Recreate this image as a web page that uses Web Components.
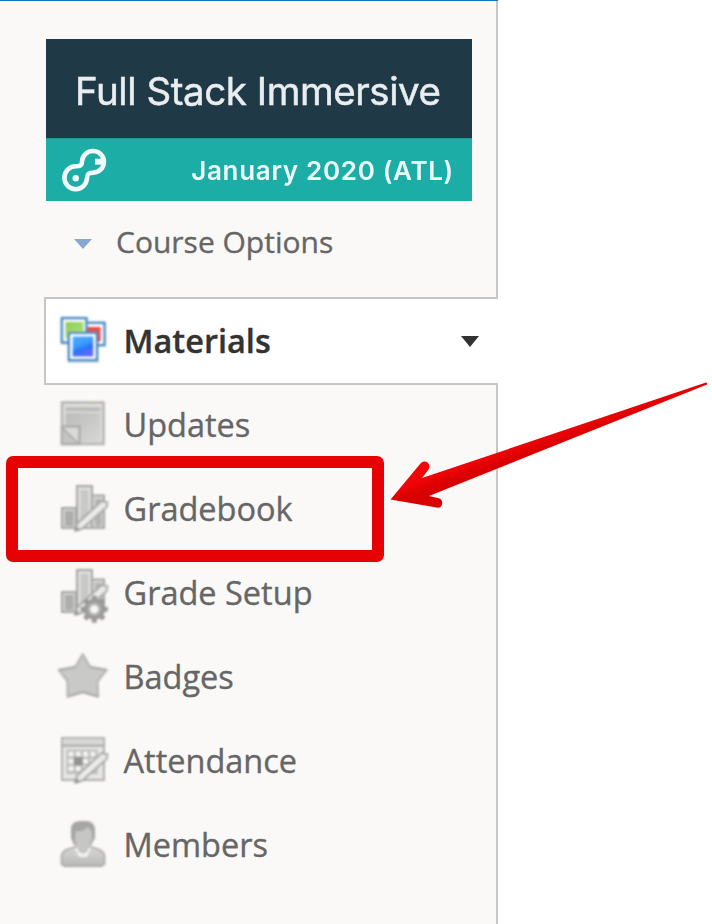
<!DOCTYPE html>
<html lang="en"><head><meta charset="utf-8"><title>Course</title>
<style>
html,body{margin:0;background:#fff;overflow:hidden}
body{width:712px;height:924px;position:relative;font-family:"Open Sans","Noto Sans",sans-serif}
</style></head><body>
<course-sidebar>
  <course-banner slot="banner"><span slot="title">Full Stack Immersive</span><span slot="term">January 2020 (ATL)</span></course-banner>
  <course-options slot="options">Course Options</course-options>
  <nav-item icon="materials" active>Materials</nav-item>
  <nav-item icon="updates">Updates</nav-item>
  <nav-item icon="gradebook">Gradebook</nav-item>
  <nav-item icon="setup">Grade Setup</nav-item>
  <nav-item icon="badges">Badges</nav-item>
  <nav-item icon="attendance">Attendance</nav-item>
  <nav-item icon="members">Members</nav-item>
</course-sidebar>
<callout-mark></callout-mark>
<script>
const define=(name,html,after)=>customElements.define(name,class extends HTMLElement{
  constructor(){super();this.attachShadow({mode:'open'}).innerHTML=html;}
  connectedCallback(){if(after)after(this);}
});
const bars=`<g stroke="#a6a6a4" stroke-width="2"><rect x="4" y="25" width="14" height="20" fill="#d4d4d2"/><rect x="19" y="3" width="15" height="42" fill="#dededc"/><rect x="34" y="12.500" width="12" height="32.500" fill="#d6d6d4"/></g><g fill="#adadab"><rect x="7" y="28" width="8.500" height="15"/><rect x="22.500" y="7" width="8" height="36" fill="#c8c8c6"/><rect x="37" y="16" width="6.500" height="27" fill="#b4b4b2"/></g>`;
const pencil=`<path d="M17 48 18.500 41 43.500 18 49.500 19 49 24 24 46Z" fill="#dededc" stroke="#a2a2a0" stroke-width="1.500"/><path d="M22 43 46 21" stroke="#f0f0ee" stroke-width="2.500"/><path d="M17 48l1-5 4 4z" fill="#969694"/>`;
let teeth='';for(let i=0;i<4;i++)teeth+=`<rect x="33.800" y="28.800" width="5" height="27" rx="1" transform="rotate(${i*45} 36.300 42.300)"/>`;
const icons={
materials:`<defs><linearGradient id="b" x1="0" y1="0" x2=".4" y2="1"><stop stop-color="#55a8fb"/><stop offset=".5" stop-color="#3a9bff"/><stop offset=".7" stop-color="#2b73f5"/><stop offset="1" stop-color="#5a6cff"/></linearGradient><linearGradient id="g" x2="1" y2="1"><stop stop-color="#8fcf58"/><stop offset="1" stop-color="#addf7b"/></linearGradient></defs>
<rect x="10" y="19" width="31" height="29" fill="#000" opacity=".12"/><rect x="3" y="6" width="27" height="24" fill="#000" opacity=".1"/>
<g fill="#fff" stroke="#4a8bc4" stroke-width="2.400"><rect x="24" y="7.800" width="22.600" height="22.400"/><rect x="3.800" y="3.100" width="24.700" height="24.400"/><rect x="10.800" y="17.800" width="28.200" height="27.400"/></g>
<path d="M29.500 12H42.500V26.500H40V16.700H29.500Z" fill="#e8494f"/><path d="M7.500 7H25.500V16.700H9.700V24H7.500Z" fill="url(#g)"/><rect x="14.700" y="21.500" width="20.500" height="20" fill="url(#b)"/>`,
updates:`<defs><linearGradient id="u" x2="1" y2="1"><stop stop-color="#bcbcba"/><stop offset="1" stop-color="#d6d6d4"/></linearGradient></defs><rect x="4" y="3.500" width="41.500" height="41.500" fill="#e0e0de" stroke="#b3b3b1" stroke-width="2.500"/><rect x="7.500" y="8" width="35" height="4.500" fill="#bdbdbb"/><rect x="7.500" y="14" width="35" height="29" fill="url(#u)"/><path d="M29 2.500h10" stroke="#cfcdae"/><path d="M4 27.500H21.500V45H4Z" fill="#dadad8" stroke="#adadab" stroke-width="2.500"/><path d="M5 29 20.500 44H5Z" fill="#c5c5c3"/><path d="M4.500 29 20 44" stroke="#a9a9a7" stroke-width="1.500"/>`,
gradebook:bars+pencil,
setup:bars+pencil+`<g fill="#9a9a98">${teeth}<circle cx="36.300" cy="42.300" r="10.500"/></g><circle cx="36.300" cy="42.300" r="7" fill="#b0b0ae"/><circle cx="36.300" cy="42.300" r="4.300" fill="#f6f6f4"/>`,
badges:`<path d="M24.700 3.500 32 16 48.500 19 39.300 30.500 40 45.500 24.700 41 9.700 45.500V30.500L1 19 17.500 16Z" fill="#c9c9c7" stroke="#bababa" stroke-width="2.600" stroke-linejoin="round"/><path d="M1 19 17.500 16M32 16 48 19M10 45.500 24.700 41 40 45.500" stroke="#a8a8a6" stroke-width="1.500"/>`,
attendance:`<rect x="4" y="3" width="42" height="42" fill="#e6e6e4" stroke="#b0b0ae" stroke-width="2"/><rect x="6" y="5" width="38" height="3" fill="#d4d4d2"/><path d="M4 10.500H46" stroke="#adadab" stroke-width="2.500"/><rect x="8.500" y="14.500" width="31" height="24.500" fill="#bcbcba"/><g fill="#f3f3f1">${[0,1,2].map(r=>[0,1,2,3].map(c=>`<rect x="${10.5+c*7.3}" y="${16.5+r*7.3}" width="5" height="5"/>`).join('')).join('')}</g><rect x="16" y="22" width="8.500" height="8.500" fill="#929290"/>`+pencil,
members:`<defs><linearGradient id="m" y2="1" x2="0"><stop stop-color="#d8d8d6"/><stop offset="1" stop-color="#b9b9b7"/></linearGradient></defs><path d="M3.500 45V37Q4 31.500 11 30L18 27.500H32L39 30Q46 31.500 46.500 37V45L43.500 47.200H6.500Z" fill="url(#m)" stroke="#a9a9a7" stroke-width="1.700"/><path d="M17 29H33L29 38H21Z" fill="#f3f3f1"/><path d="M13 19V8Q15 2 22 2H29Q36 3 37 9V19L33 26H16Z" fill="#a6a6a4"/><path d="M17.500 12 24 12 30 8 34 13V21L30 27V32L25 35 20 32V27L17 22Z" fill="#c6c6c4"/>`
};
define('course-sidebar',`<style>
:host{display:flex;flex-direction:column;box-sizing:border-box;width:498px;height:924px;background:linear-gradient(#c6c6c6,#c6c6c6) right/2px 100% no-repeat #faf9f7;border-top:1px solid #1374b8;padding:38px 0 0 44px}
::slotted([slot=banner]){margin-left:2px}
nav{display:flex;flex-direction:column;margin-top:14px}
</style><slot name="banner"></slot><slot name="options"></slot><nav><slot></slot></nav>`);
define('course-banner',`<style>
:host{display:flex;flex-direction:column;width:426px;height:162px;background:#1f3a46;color:#e9edef;font-family:Inter,sans-serif}
.t{flex:0 0 99px;box-sizing:border-box;display:flex;align-items:center;padding:4px 0 0 29px;font-size:38.5px;letter-spacing:-.45px;white-space:nowrap;-webkit-text-stroke:.5px;filter:blur(.65px)}
.b{flex:1;display:flex;align-items:center;justify-content:space-between;background:#1cada6;border-top:1px solid #1b9c98;box-sizing:border-box;padding:0 18px 0 14px;color:#edfbfa;font-size:26px;letter-spacing:.68px;font-weight:600;white-space:nowrap}
.b span{filter:blur(.6px)} svg{display:block;filter:blur(.6px)}
</style><div class="t"><slot name="title"></slot></div><div class="b"><svg width="50" height="50" viewBox="60 145 50 50" fill="none" stroke="#f2fcfb" stroke-width="4.600" stroke-linejoin="round"><path d="M82 161.500A11 10.800 0 1 1 93.500 172.600C88.500 172.600 87.300 174 87 177.700A11.300 11.500 0 1 1 75.700 166.200C80.500 166.200 82 165.500 82 161.500Z"/><circle cx="75.700" cy="178.300" r="3.200" fill="#f2fcfb" stroke="none"/><path d="M95 161.700H104" stroke-width="6"/></svg><span><slot name="term"></slot></span></div>`);
define('course-options',`<style>
:host{display:flex;align-items:center;height:82px;box-sizing:border-box;padding:0 0 1px 30px;gap:24px;color:#666;font-size:30px;white-space:nowrap;-webkit-text-stroke:.35px}
svg{flex:none;margin-top:4px}
</style><svg width="18" height="10"><path d="M0 0H18L9 10Z" fill="#88a8cf"/></svg><slot></slot>`);
define('nav-item',`<style>
:host{display:flex;align-items:center;height:84px;box-sizing:border-box;padding-left:14px;padding-right:19px;color:#666;font-size:32.5px;white-space:nowrap;-webkit-text-stroke:.35px}
:host([active]){height:88px;margin-bottom:-2px;padding-left:12px;background:#fff;border:2px solid #c6c6c6;border-right:0;color:#333;font-weight:600}
.i{flex:none;display:block;width:52px;height:52px;margin-right:13.5px;overflow:visible;filter:blur(.85px)}
span{margin-top:-2px}
.arrow{display:none;margin-left:auto}:host([active]) .arrow{display:block}
</style><svg class="i" viewBox="0 0 52 52" fill="none"></svg><span><slot></slot></span><svg class="arrow" width="18" height="11"><path d="M0 0H18L9 11Z" fill="#333"/></svg>`,
el=>{el.shadowRoot.querySelector('.i').innerHTML=icons[el.getAttribute('icon')];});
define('callout-mark',`<style>
:host{position:absolute;inset:0;pointer-events:none}svg{display:block}
</style><svg width="712" height="924"><defs><linearGradient id="r" gradientUnits="userSpaceOnUse" x1="530" y1="430" x2="539" y2="455"><stop stop-color="#f50508"/><stop offset=".45" stop-color="#ee0306"/><stop offset=".8" stop-color="#d80000"/></linearGradient></defs>
<rect x="12" y="462" width="366" height="94" rx="1" fill="none" stroke="#e60204" stroke-width="12" stroke-linejoin="round"/>
<path d="M390.500 499.500 420.500 463.500A5 5 0 0 1 428.500 469.500L422 478 706 382.500A1.300 1.300 0 0 1 707 384.500L429 496 439 498.200A5 5 0 0 1 438 507.800Z" fill="url(#r)"/></svg>`);
</script></body></html>
